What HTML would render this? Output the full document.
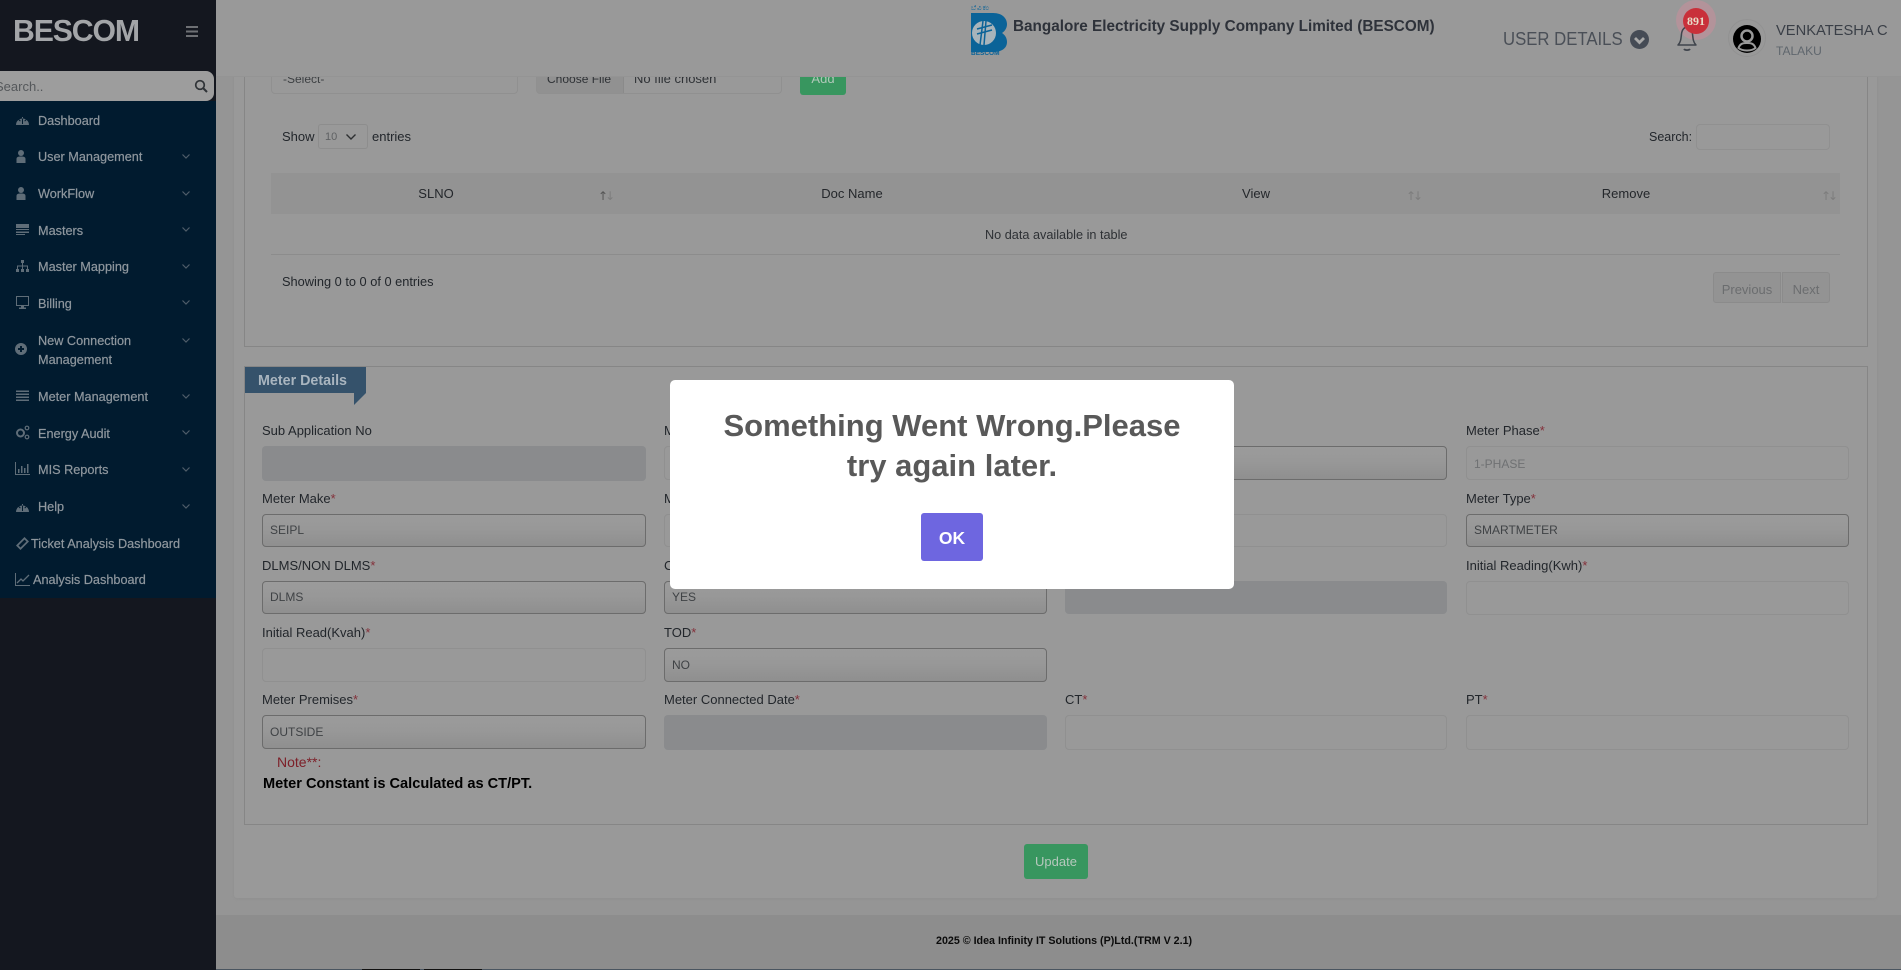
<!DOCTYPE html>
<html lang="en"><head><meta charset="utf-8"><title>BESCOM</title>
<style>
*{box-sizing:border-box}
html,body{margin:0;padding:0;width:1901px;height:970px;overflow:hidden;background:#959595;font-family:"Liberation Sans",sans-serif}
.a{position:absolute;white-space:nowrap;line-height:20px;height:20px}
.m{position:absolute;left:38px;margin-top:1px;font-size:12.7px;line-height:20px;height:20px;color:#8f979e;white-space:nowrap;-webkit-text-stroke:.2px #8f979e}
.ic{position:absolute;left:15px;width:15px;height:15px;fill:#5f6d78;stroke:none}
.ch{position:absolute;left:181px;width:10px;height:7px;fill:none;stroke:#4f5d69;stroke-width:1.2}
.l{position:absolute;margin-top:1px;font-size:13px;line-height:20px;height:20px;color:#22262b;white-space:nowrap}
.l i{font-style:normal;color:#84303a}
.f{position:absolute;border-radius:4px;border:1px solid #909090;background:#999;font-size:12px;color:#4c4f52;line-height:30px;padding-left:7px}
.s{border-color:#6c6c6c;background:linear-gradient(#9b9b9b 0%,#989898 45%,#8f8f8f 100%);border-width:1.3px}
.d{border:0;background:#8a8b8d}
.th{position:absolute;top:184px;font-size:13px;line-height:20px;color:#24272b;transform:translateX(-50%)}
.so{position:absolute;top:189px;font-family:"DejaVu Sans",sans-serif;font-size:12px;line-height:14px;color:#7d7d7d;letter-spacing:-3px}
</style></head><body>

<!-- main -->
<div style="position:absolute;left:216px;top:0;width:1685px;height:970px;background:#959595"></div>
<div style="position:absolute;left:234px;top:60px;width:1643px;height:838px;background:#999;border-radius:3px;box-shadow:0 1px 2px #909090"></div>

<!-- upload row -->
<div class="f" style="left:271px;top:60px;width:247px;height:34px;line-height:37px;padding-left:11px;color:#3c3f42">-Select-</div>
<div class="f" style="left:536px;top:60px;width:246px;height:34px;line-height:37px;padding-left:10px;color:#2f3236;background:linear-gradient(90deg,#919191 0,#919191 86px,#8a8a8a 86px,#8a8a8a 87px,#999 87px)">Choose File<span style="position:absolute;left:97px;top:-1px;font-size:13px">No file chosen</span></div>
<div style="position:absolute;left:800px;top:60px;width:46px;height:35px;background:#38965f;border-radius:3px;color:#b0c8b9;font-size:13px;text-align:center;line-height:37px">Add</div>

<!-- fieldset 1 -->
<div style="position:absolute;left:244px;top:60px;width:1624px;height:287px;border:1px solid #868686;border-top:0"></div>
<div class="l" style="left:282px;top:126px">Show</div>
<div style="position:absolute;left:318px;top:124px;width:50px;height:25px;border:1px solid #8d8d8d;border-radius:3px;font-size:11px;line-height:24px;color:#5f6163;padding-left:6px">10<svg style="position:absolute;left:26px;top:8px" width="12" height="8" viewBox="0 0 12 8"><path d="M1.500 1.500 6 6l4.500-4.500" fill="none" stroke="#2d2f31" stroke-width="1.400"/></svg></div>
<div class="l" style="left:372px;top:126px">entries</div>
<div class="a" style="left:1649px;top:127px;font-size:12.5px;color:#22262b">Search:</div>
<div class="f" style="left:1696px;top:124px;width:134px;height:26px"></div>

<div style="position:absolute;left:271px;top:173px;width:1569px;height:41px;background:#939393"></div>
<div class="th" style="left:436px">SLNO</div><div class="so" style="left:598px"><span style="color:#555">↑</span>↓</div>
<div class="th" style="left:852px">Doc Name</div>
<div class="th" style="left:1256px">View</div><div class="so" style="left:1406px">↑↓</div>
<div class="th" style="left:1626px">Remove</div><div class="so" style="left:1821px">↑↓</div>
<div class="a" style="left:985px;top:225px;font-size:12.7px;color:#2e3135">No data available in table</div>
<div style="position:absolute;left:271px;top:254px;width:1569px;height:1px;background:#8c8c8c"></div>
<div class="a" style="left:282px;top:272px;font-size:12.8px;color:#22262b">Showing 0 to 0 of 0 entries</div>
<div style="position:absolute;left:1713px;top:272px;width:68px;height:31px;background:#939393;border:1px solid #8b8b8b;border-radius:3px 0 0 3px;font-size:13px;color:#6b6d6f;text-align:center;line-height:33px">Previous</div>
<div style="position:absolute;left:1782px;top:272px;width:48px;height:31px;background:#939393;border:1px solid #8b8b8b;border-radius:0 3px 3px 0;font-size:13px;color:#6b6d6f;text-align:center;line-height:33px">Next</div>

<!-- fieldset 2 -->
<div style="position:absolute;left:244px;top:366px;width:1624px;height:459px;border:1px solid #868686"></div>
<div style="position:absolute;left:245px;top:367px;width:121px;height:26px;background:#35526b;color:#a9b5bf;font-size:14.300px;font-weight:bold;line-height:28px;padding-left:13px">Meter Details</div>
<svg style="position:absolute;left:354px;top:393px" width="12" height="12"><path d="M0 0H12L0 12Z" fill="#35526b"/></svg>

<!-- row 1 -->
<div class="l" style="left:262px;top:420px">Sub Application No</div>
<div class="f d" style="left:262px;top:446px;width:384px;height:35px"></div>
<div class="l" style="left:664px;top:420px">M</div>
<div class="f" style="left:664px;top:446px;width:383px;height:34px"></div>
<div class="f s" style="left:1065px;top:446px;width:382px;height:34px"></div>
<div class="l" style="left:1466px;top:420px">Meter Phase<i>*</i></div>
<div class="f" style="left:1466px;top:446px;width:383px;height:34px;line-height:35px;color:#6f7173">1-PHASE</div>
<!-- row 2 -->
<div class="l" style="left:262px;top:488px">Meter Make<i>*</i></div>
<div class="f s" style="left:262px;top:514px;width:384px;height:33px;color:#3f4245">SEIPL</div>
<div class="l" style="left:664px;top:488px">M</div>
<div class="f" style="left:664px;top:514px;width:383px;height:33px"></div>
<div class="f" style="left:1065px;top:514px;width:382px;height:33px"></div>
<div class="l" style="left:1466px;top:488px">Meter Type<i>*</i></div>
<div class="f s" style="left:1466px;top:514px;width:383px;height:33px;color:#3f4245">SMARTMETER</div>
<!-- row 3 -->
<div class="l" style="left:262px;top:555px">DLMS/NON DLMS<i>*</i></div>
<div class="f s" style="left:262px;top:581px;width:384px;height:33px;color:#3f4245">DLMS</div>
<div class="l" style="left:664px;top:555px">C</div>
<div class="f s" style="left:664px;top:581px;width:383px;height:33px;color:#3f4245">YES</div>
<div class="f d" style="left:1065px;top:581px;width:382px;height:33px"></div>
<div class="l" style="left:1466px;top:555px">Initial Reading(Kwh)<i>*</i></div>
<div class="f" style="left:1466px;top:581px;width:383px;height:34px"></div>
<!-- row 4 -->
<div class="l" style="left:262px;top:622px">Initial Read(Kvah)<i>*</i></div>
<div class="f" style="left:262px;top:648px;width:384px;height:34px"></div>
<div class="l" style="left:664px;top:622px">TOD<i>*</i></div>
<div class="f s" style="left:664px;top:648px;width:383px;height:34px;line-height:32px;color:#3f4245">NO</div>
<!-- row 5 -->
<div class="l" style="left:262px;top:689px">Meter Premises<i>*</i></div>
<div class="f s" style="left:262px;top:715px;width:384px;height:34px;line-height:32px;color:#3f4245">OUTSIDE</div>
<div class="l" style="left:664px;top:689px">Meter Connected Date<i>*</i></div>
<div class="f d" style="left:664px;top:715px;width:383px;height:35px"></div>
<div class="l" style="left:1065px;top:689px">CT<i>*</i></div>
<div class="f" style="left:1065px;top:715px;width:382px;height:35px"></div>
<div class="l" style="left:1466px;top:689px">PT<i>*</i></div>
<div class="f" style="left:1466px;top:715px;width:383px;height:35px"></div>

<div class="a" style="left:277px;top:752px;font-size:14px;color:#7d2029">Note**:</div>
<div class="a" style="left:263px;top:774px;font-size:14.6px;font-weight:bold;color:#000">Meter Constant is Calculated as CT/PT.</div>

<div style="position:absolute;left:1024px;top:844px;width:64px;height:35px;background:#38965f;border-radius:3px;color:#b6c8bd;font-size:13px;text-align:center;line-height:36px">Update</div>

<!-- footer -->
<div style="position:absolute;left:216px;top:915px;width:1685px;height:54px;background:#8d8d8d"></div>
<div class="a" style="left:936px;top:931px;font-size:10.7px;font-weight:bold;color:#0c0c0c">2025 © Idea Infinity IT Solutions (P)Ltd.(TRM V 2.1)</div>
<div style="position:absolute;left:0;top:969px;width:1901px;height:1px;background:#4a5560"></div>
<div style="position:absolute;left:362px;top:969px;width:58px;height:1px;background:#111"></div>
<div style="position:absolute;left:424px;top:969px;width:58px;height:1px;background:#111"></div>

<!-- header -->
<div style="position:absolute;left:216px;top:0;width:1685px;height:77px;background:#999;border-bottom:1px solid #949494"></div>
<svg style="position:absolute;left:970px;top:13px" width="38" height="40" viewBox="0 0 38 40">
<path d="M1 0H23C33 0 37 6 37 11C37 15 35 18 32 20C35 22 37 25 37 29C37 35 32 39 23 39H1Z" fill="#0b6398"/>
<circle cx="14" cy="20" r="12" fill="#a8b4bb"/>
<path d="M13 8 10 32M16 8l-2 24M7 16l15-4M7 21l15-4M22 10l5-5" stroke="#0b6398" stroke-width="1.500" fill="none"/>
</svg>
<div class="a" style="left:971px;top:4px;width:36px;font-size:7px;height:9px;line-height:9px;overflow:hidden;color:#0b6398;font-family:'Liberation Sans','Noto Sans CJK SC',sans-serif;letter-spacing:1px">ಬೆವಿಕಂ</div>
<div class="a" style="left:971px;top:50px;font-size:6.500px;font-weight:bold;line-height:8px;height:8px;color:#0b6398">BESCOM</div>
<div class="a" style="left:1013px;top:17px;font-size:15.3px;font-weight:bold;color:#2e323a">Bangalore Electricity Supply Company Limited (BESCOM)</div>

<div class="a" style="left:1503px;top:29px;font-size:18.6px;color:#4a4f57;transform:scaleX(.9);transform-origin:0 50%">USER DETAILS</div>
<svg style="position:absolute;left:1630px;top:30px" width="19" height="19" viewBox="0 0 19 19"><circle cx="9.500" cy="9.500" r="9.500" fill="#454b55"/><path d="M5 8l4.500 4.500L14 8" fill="none" stroke="#a8a8a8" stroke-width="2.800"/></svg>

<div style="position:absolute;left:1676px;top:0;width:40px;height:40px;border-radius:50%;background:#b3939a"></div>
<svg style="position:absolute;left:1672px;top:24px" width="30" height="30" viewBox="0 0 30 30"><path d="M6 21C9 18 9 14 9.500 10C10 5 13 3 15 3C17 3 20 5 20.500 10C21 14 21 18 24 21Z" fill="none" stroke="#3f444c" stroke-width="1.500" stroke-linejoin="round"/><path d="M12 25c1 1.500 5 1.500 6 0" fill="none" stroke="#3f444c" stroke-width="1.800"/></svg>
<div style="position:absolute;left:1683px;top:8px;width:26px;height:26px;border-radius:50%;background:#c9303a;color:#e8dcc8;font-family:'Liberation Serif',serif;font-weight:bold;font-size:12px;text-align:center;line-height:26px">891</div>

<div style="position:absolute;left:1728px;top:19px;width:38px;height:38px;border-radius:50%;border:1px solid #929292"></div>
<svg style="position:absolute;left:1733px;top:25px" width="28" height="28" viewBox="0 0 28 28"><circle cx="14" cy="14" r="14" fill="#000"/><circle cx="14" cy="11" r="5.500" fill="none" stroke="#999" stroke-width="2.500"/><path d="M5.500 23C7 18.500 10 18 14 18C18 18 21 18.500 22.500 23C20 25 17 25.500 14 25.500C11 25.500 8 25 5.500 23Z" fill="none" stroke="#999" stroke-width="2"/></svg>
<div class="a" style="left:1776px;top:21px;font-size:14.7px;color:#3a3f47">VENKATESHA C</div>
<div class="a" style="left:1776px;top:41px;font-size:12px;color:#5f666d">TALAKU</div>

<!-- sidebar -->
<div style="position:absolute;left:0;top:0;width:216px;height:970px;background:#14171f"></div>
<div class="a" style="left:13px;top:12px;height:40px;line-height:40px;font-size:30.2px;font-weight:bold;color:#a3a5a8;letter-spacing:-1.100px">BESCOM</div>
<div style="position:absolute;left:186px;top:26px;width:12px;height:2px;background:#6e7074;box-shadow:0 4.500px 0 #6e7074,0 9px 0 #6e7074"></div>
<div style="position:absolute;left:0;top:101px;width:216px;height:497px;background:#011b2f"></div>
<div style="position:absolute;left:-10px;top:71px;width:224px;height:30px;background:#9d9d9d;border-radius:8px;overflow:hidden">
<div class="a" style="left:5px;top:6px;font-size:13px;color:#55585b">Search..</div></div>
<svg style="position:absolute;left:194px;top:79px" width="14" height="14" viewBox="0 0 14 14"><circle cx="6" cy="6" r="4.300" fill="none" stroke="#2f3337" stroke-width="1.700"/><path d="M9 9l4 4" stroke="#2f3337" stroke-width="2"/></svg>

<svg class="ic" style="top:112px" viewBox="0 0 15 15"><path d="M1 13A6.500 6.500 0 1 1 14 13H1ZM7 5V12H8V5ZM3.500 8 5 9.500 5.700 8.800 4.200 7.300ZM11.500 8 10 9.500 9.300 8.800 10.800 7.300Z" fill-rule="evenodd"/></svg>
<div class="m" style="top:110px">Dashboard</div>

<svg class="ic" style="top:149px" viewBox="0 0 15 15"><circle cx="6" cy="4" r="3"/><path d="M1.500 14V10C1.500 8 3 7.500 6 7.500S10.500 8 10.500 10V14Z"/></svg>
<div class="m" style="top:146px">User Management</div><svg class="ch" style="top:153px" viewBox="0 0 10 7"><path d="M1.500 1.500 5 5l3.500-3.500"/></svg>

<svg class="ic" style="top:186px" viewBox="0 0 15 15"><circle cx="6" cy="4" r="3"/><path d="M1.500 14V10C1.500 8 3 7.500 6 7.500S10.500 8 10.500 10V14Z"/></svg>
<div class="m" style="top:183px">WorkFlow</div><svg class="ch" style="top:190px" viewBox="0 0 10 7"><path d="M1.500 1.500 5 5l3.500-3.500"/></svg>

<svg class="ic" style="top:222px" viewBox="0 0 15 15"><path d="M1 2H14V6H1ZM1 7H14V8H1ZM1 9.500H14V11H1ZM1 12H10V13H1Z"/></svg>
<div class="m" style="top:220px">Masters</div><svg class="ch" style="top:226px" viewBox="0 0 10 7"><path d="M1.500 1.500 5 5l3.500-3.500"/></svg>

<svg class="ic" style="top:259px" viewBox="0 0 15 15"><path d="M6 1H9V4H8V6.500H13V10H14V13H11V10H12V7.500H8V10H9V13H6V10H7V7.500H3V10H4V13H1V10H2V6.500H7V4H6Z"/></svg>
<div class="m" style="top:256px">Master Mapping</div><svg class="ch" style="top:263px" viewBox="0 0 10 7"><path d="M1.500 1.500 5 5l3.500-3.500"/></svg>

<svg class="ic" style="top:295px" viewBox="0 0 15 15"><path d="M1 1H14V11H9V12.500H11V14H4V12.500H6V11H1ZM2 2V10H13V2Z" fill-rule="evenodd"/></svg>
<div class="m" style="top:293px">Billing</div><svg class="ch" style="top:299px" viewBox="0 0 10 7"><path d="M1.500 1.500 5 5l3.500-3.500"/></svg>

<svg class="ic" style="top:343px;width:12px;height:12px" viewBox="0 0 12 12"><path d="M6 0a6 6 0 1 0 0 12A6 6 0 0 0 6 0ZM5 3H7V5H9V7H7V9H5V7H3V5H5Z" fill-rule="evenodd"/></svg>
<div class="m" style="top:330px">New Connection</div>
<div class="m" style="top:349px">Management</div><svg class="ch" style="top:337px" viewBox="0 0 10 7"><path d="M1.500 1.500 5 5l3.500-3.500"/></svg>

<svg class="ic" style="top:389px" viewBox="0 0 15 15"><path d="M1 1.500H14V3H1ZM1 4.500H14V6H1ZM1 7.500H14V9H1ZM1 10.500H14V12H1Z"/></svg>
<div class="m" style="top:386px">Meter Management</div><svg class="ch" style="top:393px" viewBox="0 0 10 7"><path d="M1.500 1.500 5 5l3.500-3.500"/></svg>

<svg class="ic" style="top:425px" viewBox="0 0 15 15"><circle cx="5.500" cy="8" r="3.500" fill="none" stroke="#5f6d78" stroke-width="2"/><circle cx="12" cy="3" r="1.800" fill="none" stroke="#5f6d78" stroke-width="1.200"/><circle cx="12" cy="12" r="1.800" fill="none" stroke="#5f6d78" stroke-width="1.200"/></svg>
<div class="m" style="top:423px">Energy Audit</div><svg class="ch" style="top:429px" viewBox="0 0 10 7"><path d="M1.500 1.500 5 5l3.500-3.500"/></svg>

<svg class="ic" style="top:461px" viewBox="0 0 15 15"><path d="M0 1H1V13H15V14H0ZM3 8H4.500V12H3ZM6 5H7.500V12H6ZM9 7H10.500V12H9ZM12 3H13.500V12H12Z"/></svg>
<div class="m" style="top:459px">MIS Reports</div><svg class="ch" style="top:466px" viewBox="0 0 10 7"><path d="M1.500 1.500 5 5l3.500-3.500"/></svg>

<svg class="ic" style="top:499px" viewBox="0 0 15 15"><path d="M1 13A6.500 6.500 0 1 1 14 13H1ZM7 5V12H8V5ZM3.500 8 5 9.500 5.700 8.800 4.200 7.300ZM11.500 8 10 9.500 9.300 8.800 10.800 7.300Z" fill-rule="evenodd"/></svg>
<div class="m" style="top:496px">Help</div><svg class="ch" style="top:503px" viewBox="0 0 10 7"><path d="M1.500 1.500 5 5l3.500-3.500"/></svg>

<svg class="ic" style="top:536px;left:15px" viewBox="0 0 15 15"><path d="M9.500 1 14 5.500 5.500 14 1 9.500ZM9.500 3.500 3.500 9.500 5.500 11.500 11.500 5.500Z" fill-rule="evenodd"/></svg>
<div class="m" style="top:533px;left:31px">Ticket Analysis Dashboard</div>

<svg class="ic" style="top:572px" viewBox="0 0 15 15"><path d="M0 1H1V13H15V14H0Z"/><path d="M2 11 6 7l2 2 6-6" fill="none" stroke="#5f6d78" stroke-width="1.300"/></svg>
<div class="m" style="top:569px;left:33px">Analysis Dashboard</div>

<!-- modal -->
<div style="position:absolute;left:670px;top:380px;width:564px;height:209px;background:#fff;border-radius:5px"></div>
<div style="position:absolute;left:670px;top:406px;width:564px;text-align:center;font-size:31px;line-height:40px;font-weight:bold;color:#595959">Something Went Wrong.Please<br>try again later.</div>
<div style="position:absolute;left:921px;top:513px;width:62px;height:48px;background:#6e66e0;border-radius:3px;color:#fff;font-size:17.500px;font-weight:bold;text-align:center;line-height:50px">OK</div>
</body></html>
